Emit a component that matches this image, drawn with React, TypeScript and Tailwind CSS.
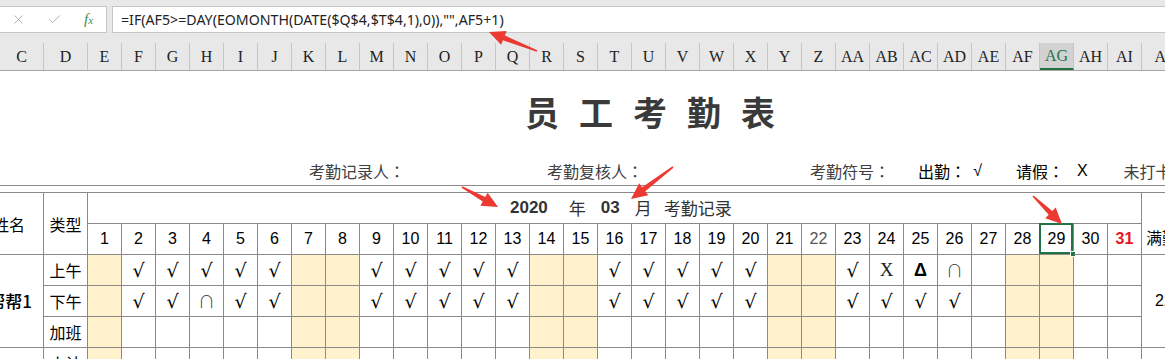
import React from "react";
import { X, Check } from "lucide-react";

const LETTERS = [
  "C", "D", "E", "F", "G", "H", "I", "J", "K", "L", "M", "N", "O", "P", "Q", "R", "S",
  "T", "U", "V", "W", "X", "Y", "Z", "AA", "AB", "AC", "AD", "AE", "AF", "AG", "AH", "AI", "AJ",
];

const DAYS = Array.from({ length: 31 }, (_, i) => i + 1);
const WEEKEND = new Set([1, 7, 8, 14, 15, 21, 22, 28, 29]);

const AM: Record<number, string> = {
  2: "√", 3: "√", 4: "√", 5: "√", 6: "√",
  9: "√", 10: "√", 11: "√", 12: "√", 13: "√",
  16: "√", 17: "√", 18: "√", 19: "√", 20: "√",
  23: "√", 24: "X", 25: "Δ", 26: "∩",
};
const PM: Record<number, string> = {
  2: "√", 3: "√", 4: "∩", 5: "√", 6: "√",
  9: "√", 10: "√", 11: "√", 12: "√", 13: "√",
  16: "√", 17: "√", 18: "√", 19: "√", 20: "√",
  23: "√", 24: "√", 25: "√", 26: "√",
};

const cjk = "font-['Noto_Sans_CJK_SC',sans-serif]";
const cell = "border-r border-b border-[#8a8a8a] flex items-center justify-center";

// tapered red callout arrow, tail -> tip
function arrowPoints(x1: number, y1: number, x2: number, y2: number) {
  const dx = x2 - x1;
  const dy = y2 - y1;
  const len = Math.hypot(dx, dy);
  const ux = dx / len;
  const uy = dy / len;
  const nx = -uy;
  const ny = ux;
  const bx = x2 - ux * 16;
  const by = y2 - uy * 16;
  const p = (x: number, y: number, w: number) => `${x + nx * w},${y + ny * w}`;
  return [
    p(x1, y1, 0.8), p(bx, by, 2.6), p(bx, by, 7.5), `${x2},${y2}`,
    p(bx, by, -7.5), p(bx, by, -2.6), p(x1, y1, -0.8),
  ].join(" ");
}

function Mark({ v }: { v?: string }) {
  if (!v) return null;
  if (v === "Δ") return <span className="font-['Liberation_Sans'] font-bold text-[18px] text-black">Δ</span>;
  if (v === "∩") return <span className="font-['Noto_Sans_CJK_SC'] font-light text-[17px] text-[#333]">∩</span>;
  if (v === "X") return <span className="font-['Liberation_Serif'] text-[19px] text-[#222]">X</span>;
  return <span className="font-['DejaVu_Serif'] text-[19px] leading-none text-black">√</span>;
}

function Colon() {
  return <span className="font-['Noto_Sans_CJK_JP']">：</span>;
}

function DataRow({ label, marks }: { label: string; marks: Record<number, string> }) {
  return (
    <>
      <div className={`${cell} text-[16px] text-black ${cjk}`}>{label}</div>
      {DAYS.map((d) => (
        <div key={d} className={`${cell} ${WEEKEND.has(d) ? "bg-[#fff2cc]" : ""}`}>
          <Mark v={marks[d]} />
        </div>
      ))}
    </>
  );
}

export default function App() {
  return (
    <div className="relative w-[1165px] h-[359px] overflow-hidden bg-white">
      {/* formula bar */}
      <div className="h-[6px] bg-[#e8e8e8]" />
      <div className="flex h-[27px] bg-[#e8e8e8]">
        <div className="w-[107px] flex items-center bg-white border-y border-r border-[#c6c6c6]">
          <X size={15} strokeWidth={1.6} className="ml-[11px] text-[#b4b4b4]" />
          <Check size={15} strokeWidth={1.6} className="ml-[21px] text-[#b4b4b4]" />
          <span className="ml-[22px] font-['Liberation_Serif'] italic text-[15px] text-[#3f8a4e]">
            f<span className="text-[11px]">x</span>
          </span>
        </div>
        <div className="w-[5px]" />
        <div className="flex-1 flex items-center bg-white border border-r-0 border-[#c6c6c6] pl-[8px] font-['Noto_Sans'] text-[14.2px] text-[#222] whitespace-nowrap">
          =IF(AF5&gt;=DAY(EOMONTH(DATE($Q$4,$T$4,1),0)),"",AF5+1)
        </div>
      </div>
      <div className="h-[10px] bg-[#e8e8e8]" />

      {/* column headers */}
      <div className="grid grid-cols-[44px_44px_repeat(31,34px)_44px] h-[28px] bg-[#e8e8e8] border-b border-[#a6a6a6]">
        {LETTERS.map((l) => (
          <div
            key={l}
            className={`flex items-center justify-center border-r border-[#c6c6c6] font-['Liberation_Serif'] text-[16px] whitespace-nowrap ${
              l === "AG" ? "bg-[#d2d2d2] text-[#217346] border-b-2 border-b-[#217346]" : "text-[#222]"
            }`}
          >
            {l}
          </div>
        ))}
      </div>

      {/* title */}
      <div className={`h-[80px] flex items-center pl-[525px] gap-[20px] text-[34px] font-bold text-[#3a3a3a] ${cjk}`}>
        <span>员</span>
        <span>工</span>
        <span>考</span>
        <span>勤</span>
        <span>表</span>
      </div>

      {/* signatures / legend */}
      <div className={`h-[35px] flex items-end pb-[4px] pl-[309px] text-[16px] leading-[20px] whitespace-nowrap border-b border-[#8a8a8a] ${cjk}`}>
        <span className="text-[#404040]">考勤记录人<Colon /></span>
        <span className="ml-[142px] text-[#404040]">考勤复核人<Colon /></span>
        <span className="ml-[167px] text-[#404040]">考勤符号<Colon /></span>
        <span className="ml-[28px] text-black">出勤<Colon /></span>
        <span className="ml-[7px] text-black font-['Liberation_Sans']">√</span>
        <span className="ml-[34px] text-black">请假<Colon /></span>
        <span className="ml-[13px] text-black font-['Liberation_Sans']">X</span>
        <span className="ml-[36px] text-[#404040]">未打卡</span>
      </div>
      <div className="h-[6px]" />

      {/* attendance table */}
      <div className="grid grid-cols-[44px_44px_repeat(31,34px)_44px] grid-rows-[31px_31px_31px_31px_31px_31px] border-t border-[#8a8a8a]">
        <div className={`row-span-2 border-r border-b border-[#8a8a8a] flex items-center justify-end pr-[18px] text-[16px] text-black whitespace-nowrap overflow-hidden ${cjk}`}>
          姓名
        </div>
        <div className={`row-span-2 ${cell} text-[16px] text-black ${cjk}`}>类型</div>
        <div className={`col-span-31 border-r border-b border-[#8a8a8a] flex items-center pl-[422px] text-[17px] text-[#333] whitespace-nowrap ${cjk}`}>
          <span className="font-['Liberation_Sans'] font-bold">2020</span>
          <span className="ml-[21px]">年</span>
          <span className="ml-[15px] font-['Liberation_Sans'] font-bold">03</span>
          <span className="ml-[15px]">月</span>
          <span className="ml-[12px]">考勤记录</span>
        </div>
        <div className={`row-span-2 border-b border-[#8a8a8a] flex items-end pb-[5px] pl-[4px] text-[16px] text-black whitespace-nowrap overflow-hidden ${cjk}`}>
          满勤天数
        </div>
        {DAYS.map((d) => (
          <div
            key={d}
            className={`${cell} relative font-['Liberation_Sans'] text-[16px] ${
              d === 31 ? "text-[#e8141c] font-bold" : d === 22 ? "text-[#555]" : "text-black"
            }`}
          >
            {d}
            {d === 29 && (
              <>
                <div className="absolute -left-[1px] -top-[1px] right-0 bottom-0 border-2 border-[#217346]" />
                <div className="absolute -right-[3px] -bottom-[3px] w-[6px] h-[6px] bg-[#217346] border border-white" />
              </>
            )}
          </div>
        ))}

        <div className={`row-span-3 border-r border-b border-[#8a8a8a] flex items-center justify-end pr-[11px] text-[17px] font-medium text-black whitespace-nowrap overflow-hidden ${cjk}`}>
          帮帮1
        </div>
        <DataRow label="上午" marks={AM} />
        <div className="row-span-3 border-b border-[#8a8a8a] flex items-center justify-center font-['Liberation_Sans'] text-[16px] text-black">
          22
        </div>
        <DataRow label="下午" marks={PM} />
        <DataRow label="加班" marks={{}} />

        <div className="border-r border-b border-[#8a8a8a]" />
        <div className={`${cell} text-[16px] text-black ${cjk}`}>小计</div>
        {DAYS.map((d) => (
          <div key={d} className={`${cell} ${WEEKEND.has(d) ? "bg-[#fff2cc]" : ""}`} />
        ))}
        <div className="border-b border-[#8a8a8a]" />
      </div>

      {/* red callout arrows drawn over the sheet */}
      <svg className="absolute inset-0 pointer-events-none" width={1165} height={359}>
        <g fill="#ea3a32">
          <polygon points={arrowPoints(537, 51, 489, 32)} />
          <polygon points={arrowPoints(462, 187, 498, 207)} />
          <polygon points={arrowPoints(673, 167, 631, 199)} />
          <polygon points={arrowPoints(1033, 196, 1062, 224)} />
        </g>
      </svg>
    </div>
  );
}
